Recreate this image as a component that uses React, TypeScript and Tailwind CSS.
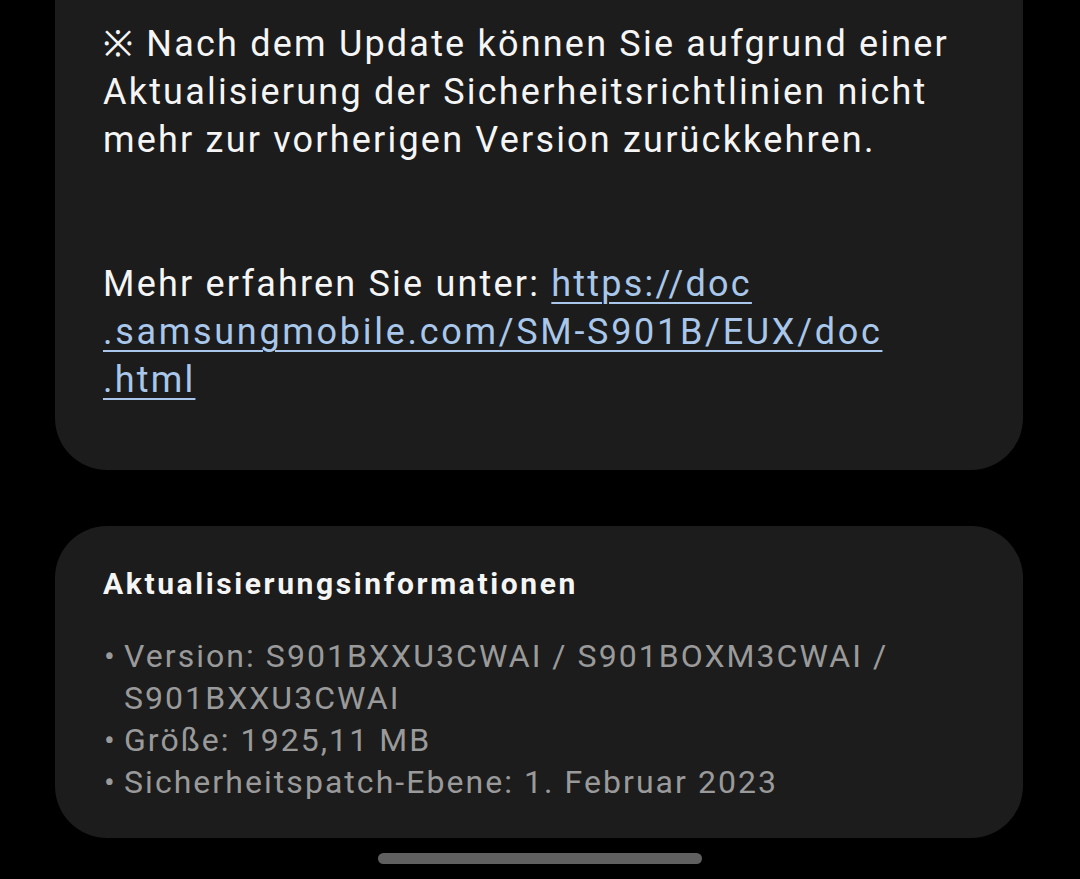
const infoItems = [
  ['Version: S901BXXU3CWAI / S901BOXM3CWAI /', 'S901BXXU3CWAI'],
  ['Größe: 1925,11 MB'],
  ['Sicherheitspatch-Ebene: 1. Februar 2023'],
];

export default function App() {
  return (
    <div className="min-h-[879px] w-[1080px] bg-black font-['Roboto',sans-serif]">
      <div className="pl-[55px] pr-[57px]">
        {/* Release notes card (top is scrolled away) */}
        <div className="rounded-b-[52px] bg-[#1c1c1c] px-[48px] pt-[20px] pb-[66px] text-[36px] leading-[48px] tracking-[2.2px] text-[#f5f5f5]">
          <p className="whitespace-nowrap">
            ※ Nach dem Update können Sie aufgrund einer
            <br />
            Aktualisierung der Sicherheitsrichtlinien nicht
            <br />
            mehr zur vorherigen Version zurückkehren.
          </p>
          <div className="h-[96px]" />
          <p className="whitespace-nowrap">
            Mehr erfahren Sie unter:{' '}
            <a className="text-[#a9c7ea] underline decoration-2 underline-offset-[6px]">
              https://doc
              <br />
              <span className="tracking-[2.7px]">.samsungmobile.com/SM-S901B/EUX/doc</span>
              <br />
              .html
            </a>
          </p>
        </div>

        {/* Update info card */}
        <div className="mt-[56px] rounded-[52px] bg-[#1c1c1c] px-[48px] pt-[38px] pb-[35px]">
          <h3 className="text-[30px] leading-[40px] font-bold tracking-[2.6px] text-[#f5f5f5]">
            Aktualisierungsinformationen
          </h3>
          <ul className="mt-[31px] text-[32px] leading-[42px] tracking-[2.05px] text-[#9a9a9a]">
            {infoItems.map((lines) => (
              <li key={lines[0]} className="flex">
                <span className="w-[21px] shrink-0 pl-[1px] tracking-normal">•</span>
                <span className="whitespace-nowrap">
                  {lines.map((l, i) => (
                    <span key={l}>
                      {i > 0 && <br />}
                      {l}
                    </span>
                  ))}
                </span>
              </li>
            ))}
          </ul>
        </div>
      </div>

      {/* Gesture bar */}
      <div className="flex justify-center pt-[15px]">
        <div className="h-[11px] w-[324px] rounded-full bg-[#606060]" />
      </div>
    </div>
  );
}
